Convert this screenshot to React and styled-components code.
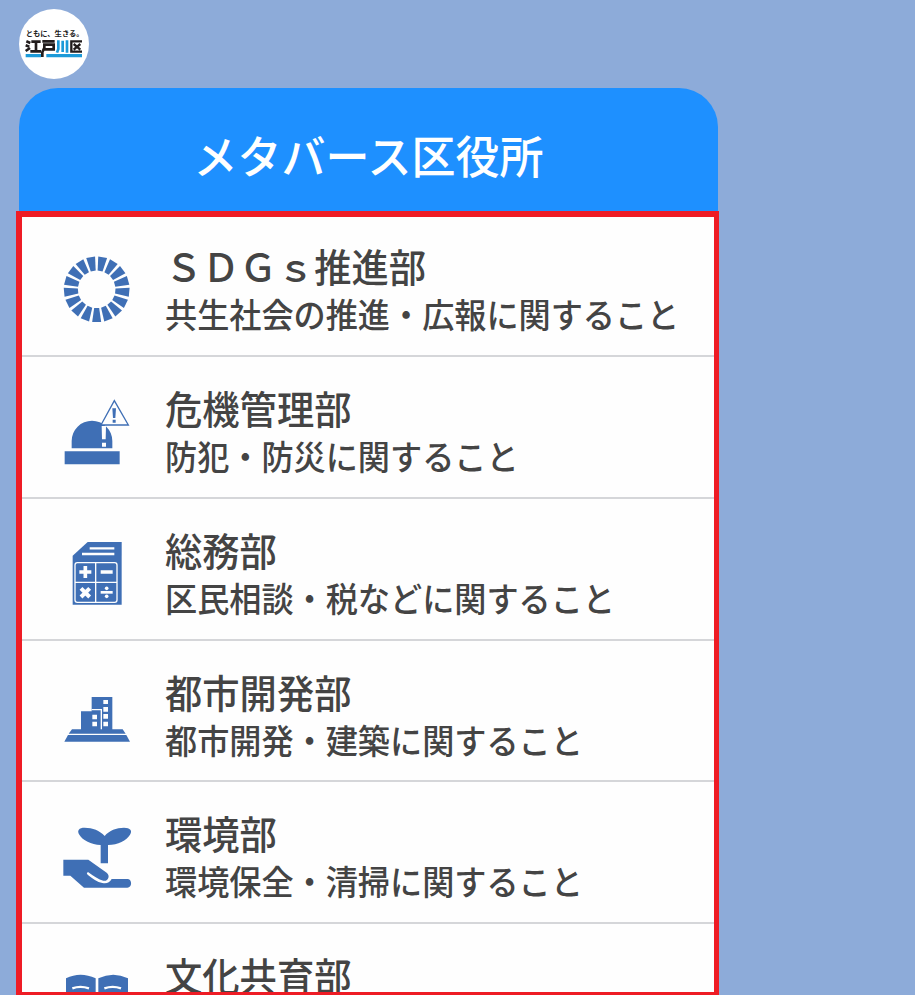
import React from "react";
import styled, { createGlobalStyle } from "styled-components";

const BLUE = "#3f6fb5";

const GlobalStyle = createGlobalStyle`
  body {
    margin: 0;
    background: #8dabd9;
    font-family: "Noto Sans CJK JP", sans-serif;
  }
`;

const Page = styled.div`
  box-sizing: border-box;
  height: 995px;
  padding: 9px 0 0 16px;
  overflow: hidden;
`;

// 丸いロゴ
const LogoBadge = styled.div`
  width: 70px;
  height: 70px;
  margin: 0 0 9px 3px;
  border-radius: 50%;
  background: #fff;
`;

const Header = styled.h1`
  display: flex;
  align-items: center;
  justify-content: center;
  box-sizing: border-box;
  width: 699px;
  height: 123px;
  margin: 0 0 0 3px;
  padding: 8px 0 0 0;
  border-radius: 39px 39px 0 0;
  background: #1e90ff;
  color: #fff;
  font-size: 44px;
  font-weight: 500;
  line-height: 1;
`;

const HeaderText = styled.span`
  transform: scaleY(1.04);
`;

// 赤枠のリスト
const ListFrame = styled.div`
  box-sizing: border-box;
  width: 702.5px;
  height: 785px;
  border: 6px solid #ee1c25;
  border-right-width: 5.5px;
  border-bottom-width: 4px;
  background: #fefefe;
  overflow: hidden;
`;

const List = styled.ul`
  margin: -2.1px 0 0;
  padding: 0;
  list-style: none;
`;

const Item = styled.li`
  display: flex;
  box-sizing: border-box;
  height: 141.9px;
  padding: 30px 0 0 33px;
  border-bottom: 2px solid #d5d6d9;
`;

const Icon = styled.svg`
  flex: none;
  width: 85px;
  height: 85px;
  fill: ${BLUE};
`;

const Texts = styled.div`
  padding: 0 0 0 25px;
  color: #444;
  font-weight: 500;
  white-space: nowrap;
`;

const Name = styled.div`
  font-size: 37.3px;
  line-height: 40px;
  transform: scaleY(1.04);
`;

const Detail = styled.div`
  margin-top: 7px;
  font-size: 32.15px;
  line-height: 42px;
  transform: scaleY(1.05);
`;

function Logo() {
  return (
    <svg width="70" height="70" viewBox="0 0 210 210">
      <text
        x="20"
        y="82"
        fontSize="21.5"
        fontWeight="700"
        textLength="174"
        lengthAdjust="spacingAndGlyphs"
        fill="#222"
      >
        ともに、生きる。
      </text>
      <g fill="none" stroke="#221c1c" strokeWidth="8">
        <path d="M22 97l12 5M20 109l11 4M20 126l13-9M37 98h28M51 98v29M34 127h32" />
        <path d="M70 97h37M76 107h28v14H76M76 103v13l-6 14v14" />
        <path d="M189 97h-32v31h32M164 105l20 17M184 105l-20 17" strokeWidth="7" />
      </g>
      <g fill="none" stroke="#1c9ad8" strokeWidth="8">
        <path d="M118 94v26l-4 11M131 95v34M144 94v37" />
        <path d="M20 140h46M82 140h107" strokeWidth="10" />
      </g>
    </svg>
  );
}

// 17枚の羽根を並べた輪
function WheelIcon() {
  return (
    <Icon viewBox="0 -1 255 255">
      {Array.from({ length: 17 }, (_, i) => (
        <path
          key={i}
          d="M-13.5 98h27L7.5 56h-15z"
          transform={`translate(125 132) rotate(${(i * 360) / 17})`}
        />
      ))}
    </Icon>
  );
}

function AlarmIcon() {
  return (
    <Icon viewBox="0 -10 255 255">
      <path d="M29 183h165v39H29zM50 174v-22a61 61 0 0 1 122 0v22z" />
      <path d="M178 31l42 73h-82z" fill="#fefefe" stroke={BLUE} strokeWidth="4" />
      <path d="M172 54h11l-2 29h-7zM173 88h9v9h-9z" />
      <path d="M140 107h13l-1 40h-11zM141 157h12v12h-12z" fill="#fefefe" />
    </Icon>
  );
}

function CalculatorIcon() {
  return (
    <Icon viewBox="0 -3 255 255">
      <path d="M98 36h102v188H53V77z" />
      <g fill="none" stroke="#fefefe">
        <path d="M104 55h74M81 72h97" strokeWidth="7" />
        <rect x="60" y="98" width="126" height="119" rx="7" strokeWidth="4" />
        <path d="M122 98v119M60 157h126" strokeWidth="4" />
        <path d="M73 126h36M91 108v36M137 126h36" strokeWidth="11" />
        <path d="M78 175l26 26M104 175l-26 26" strokeWidth="12" />
        <path d="M137 187h36" strokeWidth="8" />
      </g>
      <circle cx="155" cy="175" r="5.5" fill="#fefefe" />
      <circle cx="155" cy="199" r="5.5" fill="#fefefe" />
    </Icon>
  );
}

function BuildingIcon() {
  return (
    <Icon viewBox="0 -42 255 255">
      <path d="M78 79h32V36h62v97h31l9 13H41l10-13h27z" />
      <path d="M39 150h175l11 20H28z" />
      <path d="M110 74h29v59" fill="none" stroke="#fefefe" strokeWidth="4" />
      <path
        fill="#fefefe"
        d="M145 45h14v12h-14zM145 66h14v14h-14zM145 87h14v14h-14zM145 110h14v14h-14zM112 89h14v14h-14zM112 110h14v14h-14z"
      />
    </Icon>
  );
}

function PlantIcon() {
  return (
    <Icon viewBox="0 -8 255 255">
      <path d="M149 64C163 47 184 39 207 39c19 0 26 9 18 21-10 17-36 30-66 31v55h-22V91C108 89 83 77 73 60c-8-13-1-21 16-21 24 0 45 8 60 25z" />
      <path d="M25 135h75l55 39c12 9 4 27-10 24-14-4-29-14-43-24-5-3-9 2-4 6 14 11 29 22 44 25 13 3 21-1 28-12h47c15 0 15 26 0 26H87L46 183H25z" />
    </Icon>
  );
}

function BookIcon() {
  return (
    <Icon viewBox="0 0 255 255">
      <path d="M33 73q43-22 89 0v110q-46-22-89 0zM130 73q45-22 89 0v110q-44-22-89 0z" />
      <path
        d="M52 103q24-9 50 0M148 103q25-9 50 0M52 125q24-9 50 0M148 125q25-9 50 0"
        fill="none"
        stroke="#fefefe"
        strokeWidth="7"
      />
    </Icon>
  );
}

const departments = [
  { icon: WheelIcon, name: "\uFF33\uFF24\uFF27\uFF53推進部", detail: "共生社会の推進・広報に関すること" },
  { icon: AlarmIcon, name: "危機管理部", detail: "防犯・防災に関すること" },
  { icon: CalculatorIcon, name: "総務部", detail: "区民相談・税などに関すること" },
  { icon: BuildingIcon, name: "都市開発部", detail: "都市開発・建築に関すること" },
  { icon: PlantIcon, name: "環境部", detail: "環境保全・清掃に関すること" },
  { icon: BookIcon, name: "文化共育部", detail: "" },
];

function App() {
  return (
    <>
      <GlobalStyle />
      <Page>
        <LogoBadge>
          <Logo />
        </LogoBadge>
        <Header>
          <HeaderText>メタバース区役所</HeaderText>
        </Header>
        <ListFrame>
          <List>
            {departments.map(({ icon: DeptIcon, name, detail }) => (
              <Item key={name}>
                <DeptIcon />
                <Texts>
                  <Name>{name}</Name>
                  <Detail>{detail}</Detail>
                </Texts>
              </Item>
            ))}
          </List>
        </ListFrame>
      </Page>
    </>
  );
}

export default App;
